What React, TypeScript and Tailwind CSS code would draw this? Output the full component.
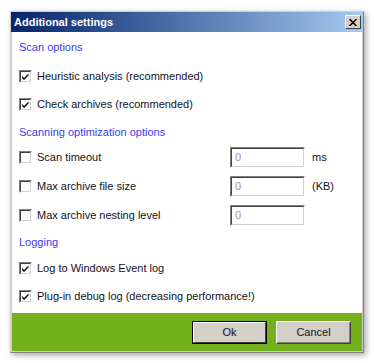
import React from 'react';

const FONT = '"Liberation Sans", Arial, sans-serif';

function Check({ checked }: { checked: boolean }) {
  return (
    <span className="w-[13px] h-[13px] flex-shrink-0 border border-t-[#808080] border-l-[#808080] border-b-white border-r-white bg-white">
      <span className="block w-full h-full border border-t-[#404040] border-l-[#404040] border-b-[#d4d0c8] border-r-[#d4d0c8]">
        {checked && (
          <svg viewBox="0 0 9 9" className="w-[9px] h-[9px]">
            <path d="M1 4 L3 6 L7.5 1.5 L7.5 3.5 L3 8 L1 6 Z" fill="#000" />
          </svg>
        )}
      </span>
    </span>
  );
}

function Header({ children, className = '' }: { children: React.ReactNode; className?: string }) {
  return <div className={`h-[13px] leading-[13px] text-[11px] text-[#3b3bef] ${className}`}>{children}</div>;
}

function CheckRow({ label, checked, h = 'h-[28px]' }: { label: string; checked: boolean; h?: string }) {
  return (
    <div className={`flex items-center gap-[5px] ${h} text-[11px] text-[#111122]`}>
      <Check checked={checked} />
      <span className="leading-[13px] whitespace-nowrap">{label}</span>
    </div>
  );
}

function OptionRow({ label, unit }: { label: string; unit?: string }) {
  return (
    <div className="flex items-center h-[29px]">
      <div className="w-[211px] flex items-center gap-[5px] text-[11px] text-[#111122]">
        <Check checked={false} />
        <span className="leading-[13px] whitespace-nowrap">{label}</span>
      </div>
      <div className="w-[75px] h-[21px] border border-t-[#808080] border-l-[#808080] border-b-white border-r-white">
        <div className="w-full h-full border border-t-[#404040] border-l-[#404040] border-b-[#d4d0c8] border-r-[#d4d0c8] bg-white pl-[3px] text-[11px] leading-[17px] text-[#9a90b8]">
          0
        </div>
      </div>
      {unit && <span className="ml-[7px] text-[11px] text-[#111122]">{unit}</span>}
    </div>
  );
}

function WinButton({ children, isDefault }: { children: React.ReactNode; isDefault?: boolean }) {
  return (
    <button
      className={`w-[75px] h-[23px] text-[11px] text-[#111122] bg-[#d4d0c8] ${
        isDefault ? 'border border-black' : 'border border-t-white border-l-white border-b-[#404040] border-r-[#404040]'
      }`}
    >
      <span
        className={`flex items-center justify-center w-full h-full border ${
          isDefault
            ? 'border-t-white border-l-white border-b-[#404040] border-r-[#404040]'
            : 'border-t-[#d4d0c8] border-l-[#d4d0c8] border-b-[#808080] border-r-[#808080]'
        }`}
      >
        {children}
      </span>
    </button>
  );
}

export default function App() {
  return (
    <div className="w-[374px] h-[363px] bg-white pt-[11px] pl-[10px]" style={{ fontFamily: FONT }}>
      <div className="w-[354px] h-[342px] flex flex-col border border-t-[#d4d0c8] border-l-[#d4d0c8] border-b-[#808080] border-r-[#808080] bg-[#d4d0c8] shadow-[2px_2px_6px_rgba(0,0,0,0.35)]">
        {/* Title bar */}
        <div className="h-[20px] flex items-center justify-between pl-[3px] pr-[2px] bg-gradient-to-r from-[#0a246a] to-[#a6caf0]">
          <span className="text-[11px] font-bold text-white leading-[13px]">Additional settings</span>
          <button className="w-[16px] h-[14px] bg-[#d4d0c8] border border-t-white border-l-white border-b-[#404040] border-r-[#404040] flex items-center justify-center">
            <svg viewBox="0 0 8 7" className="w-[8px] h-[7px]">
              <path d="M0.5 0 L7.5 7 M7.5 0 L0.5 7" stroke="#000" strokeWidth="1.5" />
            </svg>
          </button>
        </div>

        {/* Body */}
        <div className="flex-1 bg-white ml-[1px] mr-[1px] pl-[7px] pt-[9px] pb-[2px]">
          <Header>Scan options</Header>
          <div className="mt-[8px]">
            <CheckRow label="Heuristic analysis (recommended)" checked />
            <CheckRow label="Check archives (recommended)" checked />
          </div>
          <Header className="mt-[8px]">Scanning optimization options</Header>
          <div className="mt-[4px]">
            <OptionRow label="Scan timeout" unit="ms" />
            <OptionRow label="Max archive file size" unit="(KB)" />
            <OptionRow label="Max archive nesting level" />
          </div>
          <Header className="mt-[6px]">Logging</Header>
          <div className="mt-[5px]">
            <CheckRow label="Log to Windows Event log" checked />
            <CheckRow label="Plug-in debug log (decreasing performance!)" checked />
          </div>
        </div>

        {/* Footer */}
        <div className="h-[38px] mx-[1px] mb-[1px] bg-[#72b01d] flex items-center justify-end gap-[9px] pr-[11px]">
          <WinButton isDefault>Ok</WinButton>
          <WinButton>Cancel</WinButton>
        </div>
      </div>
    </div>
  );
}
